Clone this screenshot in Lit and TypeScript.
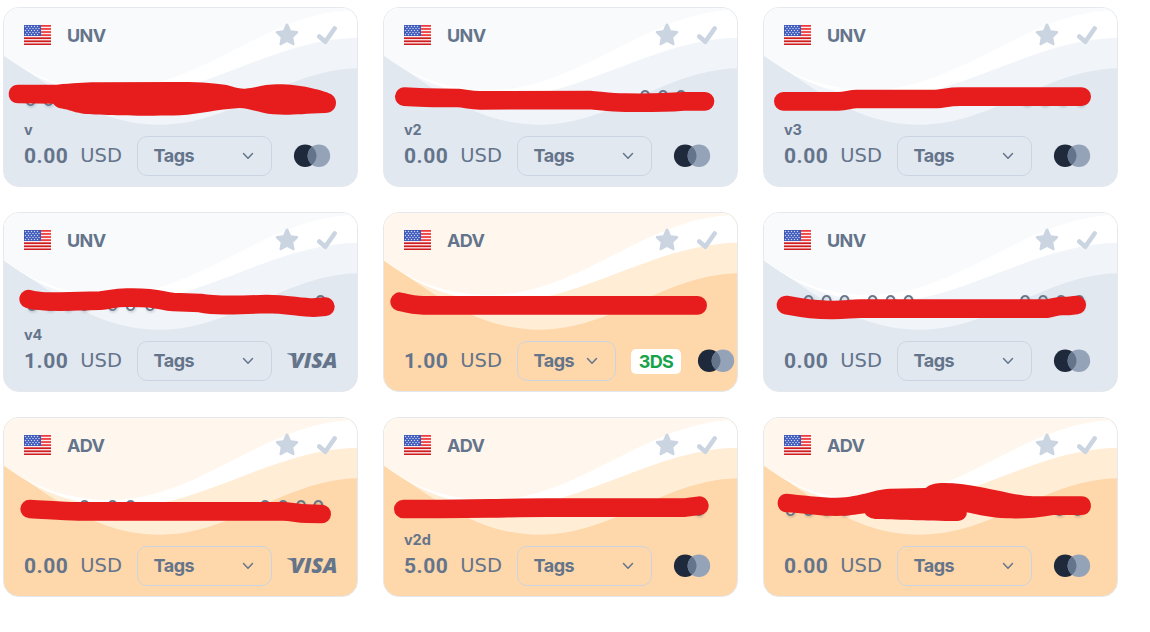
import { LitElement, html, svg, css, nothing } from 'lit';
import { customElement, property } from 'lit/decorators.js';
import { classMap } from 'lit/directives/class-map.js';

interface Card {
	type: 'UNV' | 'ADV';
	amount: string;
	network: 'mastercard' | 'visa';
	note?: string;
	secure?: boolean;
	// horizontal positions of the digits that show past the marker
	digits: number[];
	stroke?: string;
	blob?: string;
}

const cards: Card[] = [
	{
		type: 'UNV',
		amount: '0.00',
		network: 'mastercard',
		note: 'v',
		digits: [92, 146],
		blob: 'M54 254H170C220 250 250 247 290 247L520 246C600 245 650 250 680 255C700 260 715 267 735 266C770 264 780 254 830 253C900 252 960 270 985 279C1000 284 1008 295 1008 308C1008 325 996 339 975 339C900 342 870 346 820 343C780 339 750 325 718 324C650 328 600 342 540 346C440 349 300 345 250 341C210 335 215 330 180 325C170 322 165 318 160 311L54 310C17 310 17 254 54 254Z'
	},
	{
		type: 'UNV',
		amount: '0.00',
		network: 'mastercard',
		note: 'v2',
		digits: [795, 849, 903],
		stroke: 'M73 290C110 293 150 294 235 294C260 296 270 301 300 301L630 300C660 302 690 308 735 308C800 309 860 308 910 304H975'
	},
	{
		type: 'UNV',
		amount: '0.00',
		network: 'mastercard',
		note: 'v3',
		digits: [800, 854, 908, 962],
		stroke: 'M70 304H235C260 303 270 297 290 297H530C555 295 565 290 600 290H965'
	},
	{
		type: 'UNV',
		amount: '1.00',
		network: 'visa',
		note: 'v4',
		digits: [96, 150, 204, 254, 338, 392, 450, 962],
		stroke: 'M86 282C110 290 150 290 180 290L300 287C330 285 340 278 380 278C480 276 480 288 520 291L600 294C640 302 690 302 800 297C860 297 900 308 940 308L976 305'
	},
	{
		type: 'ADV',
		amount: '1.00',
		network: 'mastercard',
		secure: true,
		digits: [],
		stroke: 'M59 290C90 298 100 301 130 301H953'
	},
	{
		type: 'UNV',
		amount: '0.00',
		network: 'mastercard',
		digits: [146, 200, 254, 338, 392, 446, 795, 849, 903, 958],
		stroke: 'M78 300C120 308 170 316 220 315C260 315 270 311 300 311H860C880 308 890 303 905 303H925L950 300'
	},
	{
		type: 'ADV',
		amount: '0.00',
		network: 'visa',
		digits: [254, 338, 392, 795, 849, 903, 955],
		stroke: 'M89 297C140 299 180 304 235 304H850C880 305 890 311 920 311L965 312'
	},
	{
		type: 'ADV',
		amount: '5.00',
		network: 'mastercard',
		note: 'v2d',
		digits: [957],
		stroke: 'M70 297H180L330 295C400 294 440 293 500 293H910L958 287'
	},
	{
		type: 'ADV',
		amount: '0.00',
		network: 'mastercard',
		digits: [92, 146, 200, 254, 899, 953],
		blob: 'M80 251C120 255 180 263 230 263C310 260 330 240 390 236L497 234C510 222 530 219 550 219C650 219 760 259 820 259H965C1002 259 1002 315 965 315H880C830 325 780 326 740 325C690 323 660 315 620 307C622 320 610 332 592 333C500 333 400 328 345 327C330 325 318 318 315 310C280 314 270 318 230 318C170 318 120 308 80 307C44 307 44 251 80 251Z'
	}
];

@customElement('bank-card')
export class BankCard extends LitElement {
	@property({ attribute: false })
	card!: Card;

	static styles = [
		css`
			:host {
				display: block;
				--wave-1: #f8fafc;
				--wave-2: #f1f5f9;
				--wave-3: #e2e8f0;
			}
			.card {
				position: relative;
				display: flex;
				flex-direction: column;
				box-sizing: border-box;
				width: 355px;
				height: 180px;
				padding: 14px 20px 10px;
				border: 1px solid #e5e9ee;
				border-radius: 16px;
				background: var(--wave-3);
				color: #64748b;
				overflow: hidden;
			}
			.adv {
				--wave-1: #fff7ed;
				--wave-2: #ffedd5;
				--wave-3: #fed7aa;
			}
			.layer {
				position: absolute;
				inset: 0;
				width: 100%;
				height: 100%;
			}
			.wave-1 {
				fill: var(--wave-1);
			}
			.wave-2 {
				fill: var(--wave-2);
			}
			.digits {
				font: 400 62px 'DejaVu Sans', sans-serif;
				fill: #64748b;
				text-anchor: middle;
				filter: drop-shadow(2px 4px 3px rgba(0, 0, 0, 0.2));
			}
			.marker {
				fill: none;
				stroke: #e71d1d;
				stroke-width: 56;
				stroke-linecap: round;
				stroke-linejoin: round;
			}
			.blob {
				fill: #e71d1d;
			}
			header,
			.row,
			.note {
				position: relative;
				display: flex;
				align-items: center;
			}
			header {
				height: 26px;
			}
			.type {
				flex: 1;
				margin-left: 16px;
				padding-top: 2px;
				font: 700 18px/26px Inter, sans-serif;
				letter-spacing: -0.6px;
			}
			.flag,
			.star,
			.check {
				display: block;
			}
			.star {
				margin-right: 18px;
				fill: #cbd5e1;
			}
			.check {
				fill: none;
				stroke: #cbd5e1;
				stroke-width: 4.6;
				stroke-linecap: round;
				stroke-linejoin: round;
			}
			.note {
				height: 13px;
				margin-top: auto;
				font: 700 14.5px/13px Inter, sans-serif;
				letter-spacing: -0.1px;
			}
			.row {
				height: 40px;
				gap: 15px;
			}
			.price {
				display: flex;
				flex: none;
				justify-content: space-between;
				box-sizing: border-box;
				width: 98px;
				height: 40px;
				font: 400 21px/40px Roboto, sans-serif;
			}
			.price b {
				font-weight: 700;
				letter-spacing: 0.5px;
			}
			.price span {
				font: 400 19.5px/40px 'DejaVu Sans', sans-serif;
			}
			.tags {
				display: flex;
				flex: 1 0 99px;
				align-items: center;
				justify-content: space-between;
				box-sizing: border-box;
				height: 40px;
				padding: 0 17.5px 0 15.5px;
				border: 1px solid #cbd5e1;
				border-radius: 10px;
				font: 700 18px/38px Inter, sans-serif;
				letter-spacing: -0.5px;
			}
			.network {
				display: flex;
				flex: none;
				align-items: center;
				gap: 10px;
			}
			.network svg {
				overflow: visible;
			}
			.secure {
				width: 50px;
				border-radius: 5px;
				background: #fff;
				color: #16a34a;
				font: 700 18px/25px Inter, sans-serif;
				letter-spacing: -0.6px;
				text-align: center;
			}
			.visa {
				font: italic 800 20.5px 'Open Sans', sans-serif;
				fill: #64748b;
			}
		`
	];

	renderFlag() {
		const stripes = Array.from({ length: 7 }, (_, i) => i * 3.08);
		const stars = [1.5, 3.5, 5.5, 7.5, 9.5].flatMap((y, row) =>
			[1.5, 4.5, 7.5, 10.5, 13.5].map((x) => [x + (row % 2) * 1.5, y])
		);
		return html`<svg class="flag" width="27" height="20" viewBox="0 0 27 20">
			<rect width="27" height="20" fill="#fbeeee" />
			${stripes.map(
				(y, i) =>
					svg`<rect y=${y} width="27" height="1.75" fill=${i < 4 ? '#ee3a3c' : '#cf1c1e'} />`
			)}
			<rect width="17" height="11" fill="#3c57b8" />
			${stars.map(([x, y]) => svg`<circle cx=${x} cy=${y} r="0.75" fill="#d0daf6" />`)}
		</svg>`;
	}

	renderNetwork() {
		if (this.card.network === 'visa') {
			return html`<svg width="50" height="24" viewBox="0 0 50 24">
				<text class="visa" x="3.5" y="19" textLength="47" lengthAdjust="spacingAndGlyphs">VISA</text>
				<path d="M.3 4.3H6.2Q8 4.6 8.3 6L9.6 12.8Q7 6.5.3 4.9Z" fill="#64748b" />
			</svg>`;
		}
		return html`<svg width="50" height="24" viewBox="0 0 50 24">
			<circle cx="18.2" cy="11.8" r="11.3" fill="#1e293b" />
			<circle cx="31.9" cy="11.8" r="11.3" fill="#94a3b8" />
			<path d="M25.05 2.8a11.3 11.3 0 0 1 0 18a11.3 11.3 0 0 1 0-18Z" fill="#64748b" />
		</svg>`;
	}

	render() {
		const { type, amount, note, secure, digits, stroke, blob } = this.card;
		return html`<div class=${classMap({ card: true, adv: type === 'ADV' })}>
			<svg class="layer" viewBox="12 24 1059 534">
				<path class="wave-2" d="M10 165C170 270 290 374 480 374C700 374 850 210 1074 205V20H10Z" />
				<path d="M10 165C130 255 240 290 380 290C600 290 830 115 1074 113V20H10Z" fill="#fff" />
				<path class="wave-1" d="M10 165C110 240 220 270 330 270C600 270 800 30 1074 30V20H10Z" />
				<g class="digits">${digits.map((x) => svg`<text x=${x} y="319">0</text>`)}</g>
				${stroke ? svg`<path class="marker" d=${stroke} />` : nothing}
				${blob ? svg`<path class="blob" d=${blob} />` : nothing}
			</svg>
			<header>
				${this.renderFlag()}
				<span class="type">${type}</span>
				<svg class="star" width="24" height="24" viewBox="0 0 24 24">
					<path
						d="M12 .6c.6 0 1.1.3 1.4.9l2.5 5.7 6.1.7c1.3.2 1.7 1.4.8 2.3l-4.5 4.2 1.2 6.3c.2 1.3-.9 2-1.9 1.4L12 19l-5.6 3.1c-1 .6-2.1-.1-1.9-1.4l1.2-6.3L1.2 10.2c-.9-.9-.5-2.1.8-2.3l6.1-.7 2.5-5.7C10.9.9 11.4.6 12 .6Z"
					/>
				</svg>
				<svg class="check" width="20" height="20" viewBox="0 0 20 20">
					<path d="M2.3 11.5L8.3 16.7L17.6 3.5" />
				</svg>
			</header>
			<div class="note">${note}</div>
			<div class="row">
				<div class="price"><b>${amount}</b><span>USD</span></div>
				<div class="tags">
					<span>Tags</span>
					<svg width="12" height="8" viewBox="0 0 12 8">
						<path
							d="M1.5 1.5L6 6.2L10.5 1.5"
							fill="none"
							stroke="#64748b"
							stroke-width="1.5"
							stroke-linecap="round"
							stroke-linejoin="round"
						/>
					</svg>
				</div>
				<div class="network">
					${secure ? html`<span class="secure">3DS</span>` : nothing} ${this.renderNetwork()}
				</div>
			</div>
		</div>`;
	}
}

@customElement('app-root')
export class AppRoot extends LitElement {
	static styles = [
		css`
			:host {
				display: block;
				min-height: 632px;
				background: #fff;
			}
			.cards {
				display: grid;
				grid-template-columns: repeat(3, 355px);
				gap: 25px;
				padding: 7px 3px;
			}
		`
	];

	render() {
		return html`<div class="cards">
			${cards.map((card) => html`<bank-card .card=${card}></bank-card>`)}
		</div>`;
	}
}
